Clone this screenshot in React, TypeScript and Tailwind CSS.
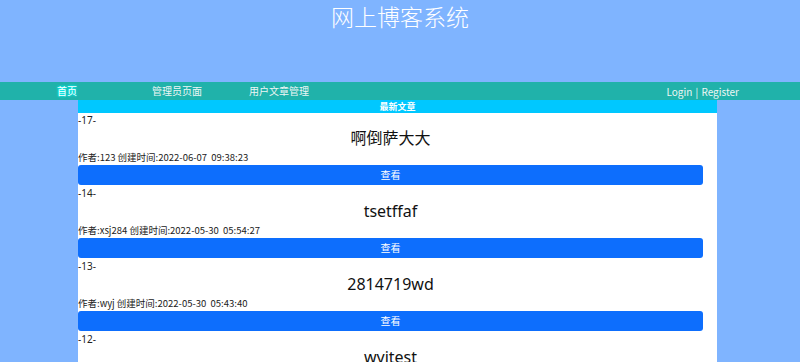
const posts = [
  { id: 17, title: "啊倒萨大大", author: "123", time: "2022-06-07\u00a0\u00a009:38:23" },
  { id: 14, title: "tsetffaf", author: "xsj284", time: "2022-05-30\u00a0\u00a005:54:27" },
  { id: 13, title: "2814719wd", author: "wyj", time: "2022-05-30\u00a0\u00a005:43:40" },
  { id: 12, title: "wyjtest", author: "wyj", time: "2022-05-30\u00a0\u00a005:40:12" },
];

export default function App() {
  return (
    <div className="h-[362px] w-[800px] overflow-hidden bg-[#7fb4ff] font-['Noto_Sans','Noto_Sans_CJK_SC',sans-serif]">
      {/* header */}
      <div className="h-[82px]">
        <h1 className="text-center text-[23px] font-light leading-[34px] text-white">网上博客系统</h1>
      </div>

      {/* nav */}
      <div className="flex h-[18px] items-center bg-[#20b2aa] text-[10px] text-[#eef6f5]">
        <a className="ml-[57px] text-white [text-shadow:0_0_3px_#00ffff,0_0_2px_#00ffff]">首页</a>
        <a className="ml-[75px]">管理员页面</a>
        <a className="ml-[47px]">用户文章管理</a>
        <div className="ml-auto mr-[61px] font-['Noto_Sans_CJK_SC',sans-serif] text-[10px]">
          Login <span className="mx-[1px]">|</span> Register
        </div>
      </div>

      {/* content */}
      <div className="ml-[78px] w-[639px] bg-white">
        <div className="h-[13px] bg-[#00c8ff] text-center text-[9px] font-bold leading-[13px] text-white">
          最新文章
        </div>
        <div className="w-[625px]">
          {posts.map((p) => (
            <div key={p.id} className="mb-[1px]">
              <div className="h-[14px] text-[10px] leading-[14px] text-[#222]">-{p.id}-</div>
              <div className="h-[22px] text-center text-[16px] leading-[22px] text-[#111]">{p.title}</div>
              <div className="h-[16px] font-['Noto_Sans_CJK_SC',sans-serif] text-[9.5px] leading-[16px] text-[#222]">
                作者:{p.author} 创建时间:{p.time}
              </div>
              <button className="block h-[20px] w-full rounded-[3px] bg-[#0d6efd] text-[10px] leading-[20px] text-white">
                查看
              </button>
            </div>
          ))}
        </div>
      </div>
    </div>
  );
}
